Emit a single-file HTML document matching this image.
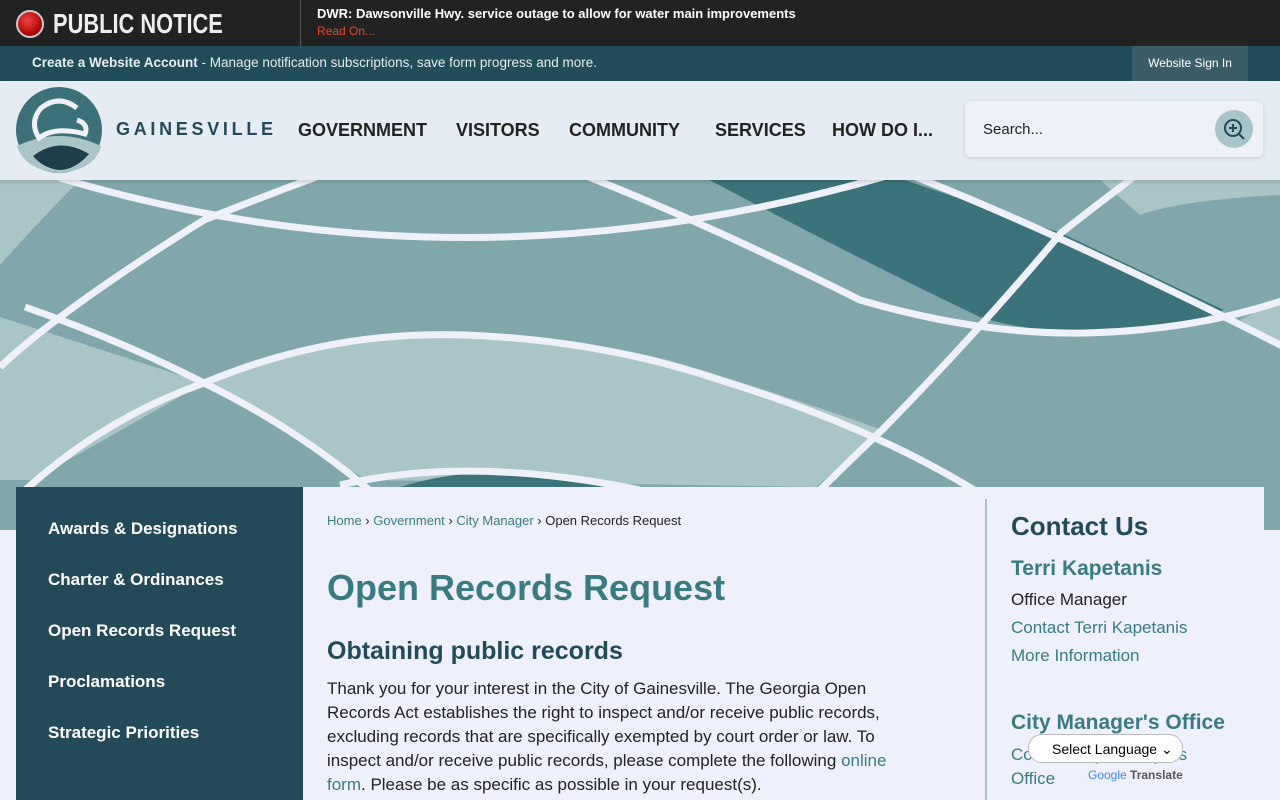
<!DOCTYPE html>
<html><head><meta charset="utf-8"><style>
*{margin:0;padding:0;box-sizing:border-box}
body{width:1280px;height:800px;overflow:hidden;background:#eef1fb;font-family:"Liberation Sans",sans-serif;position:relative}
.top{position:absolute;left:0;top:0;width:1280px;height:46px;background:#222}
.pn{position:absolute;left:16px;top:8px;display:flex;align-items:center;color:#eee;font-weight:bold;font-size:28px}
.pn span{display:inline-block;transform:scaleX(0.78);transform-origin:left}
.dot{width:28px;height:28px;border-radius:50%;background:radial-gradient(circle at 40% 35%,#e44,#a00 70%);border:2px solid #ccc;margin-right:9px}
.sep{position:absolute;left:300px;top:0;width:1px;height:46px;background:#555}
.news{position:absolute;left:317px;top:6px;color:#fff;font-size:13px;font-weight:bold}
.news span{display:block;color:#e4452d;font-size:12px;font-weight:normal;margin-top:3px}
.acct{position:absolute;left:0;top:46px;width:1280px;height:35px;background:#214c5a;color:#e6eef0;font-size:13.5px;padding:9px 32px}
.sign{position:absolute;right:32px;top:0;height:35px;width:116px;background:#3a5d69;color:#fff;font-size:12px;text-align:center;line-height:35px}
.hdr{position:absolute;left:0;top:81px;width:1280px;height:99px;background:#e6ecf4;box-shadow:0 2px 4px rgba(0,0,0,.15)}
.nav{position:absolute;top:120px;font-size:18px;font-weight:bold;color:#222}
.search{position:absolute;left:965px;top:101px;width:298px;height:56px;background:#eef1f8;border-radius:6px;box-shadow:0 1px 4px rgba(0,0,0,.15);font-size:15px;color:#222;padding:20px 18px}
.sbtn{position:absolute;right:10px;top:9px;width:38px;height:38px;border-radius:50%;background:#a9c4c8}
.side{position:absolute;left:16px;top:487px;width:287px;height:313px;background:#234a58}
.side div{color:#fff;font-size:17px;font-weight:bold;position:absolute;left:32px}
.main{position:absolute;left:303px;top:487px;width:961px;height:313px;background:#eef1fb}
a{color:#3a7b82}
</style></head><body>
<div class="top"><div class="pn"><div class="dot"></div><span>PUBLIC NOTICE</span></div><div class="sep"></div>
<div class="news">DWR: Dawsonville Hwy. service outage to allow for water main improvements<span>Read On...</span></div></div>
<div class="acct"><b>Create a Website Account</b> - Manage notification subscriptions, save form progress and more.<div class="sign">Website Sign In</div></div>
<svg style="position:absolute;left:0;top:180px" width="1280" height="350" viewBox="0 180 1280 350">
<rect x="0" y="180" width="1280" height="350" fill="#80a8ac"/>
<path d="M0 180 L80 180 Q40 220 0 265Z" fill="#a9c5c7"/>
<path d="M1100 180 L1280 180 L1280 195 Q1180 200 1140 215Z" fill="#a9c5c7"/>
<path d="M700 175 L890 175 L1061 233 L1224 310 Q1150 340 1086 333 Q1020 330 980 317 Q860 260 700 175Z" fill="#3c737b"/>
<path d="M0 317 L204 383 L33 480 L0 480Z" fill="#a9c5c7"/>
<path d="M204 383 Q330 330 465 335 Q600 340 678 363 Q800 400 882 430 L816 487 L367 480Z" fill="#a9c5c7"/>
<path d="M1240 320 L1280 300 L1280 345Z" fill="#a9c5c7"/>
<path d="M400 487 Q470 465 560 475 Q600 480 640 487Z" fill="#3c737b"/>
<path d="M0 487 L1280 487 L1280 530 L0 530Z" fill="#80a8ac"/>
<g fill="none" stroke="#eef1fa" stroke-width="7">
<path d="M60 178 Q470 300 900 172"/>
<path d="M571 170 Q700 220 860 300 Q980 335 1086 333 Q1200 330 1290 298"/>
<path d="M898 170 Q1061 233 1300 355"/>
<path d="M1143 170 Q1090 210 1061 233 Q980 330 882 430 Q840 470 810 500"/>
<path d="M0 367 Q60 310 204 220 Q280 190 330 172"/>
<path d="M25 307 Q120 340 204 383 Q300 430 375 495"/>
<path d="M20 495 Q100 420 204 383 Q330 330 465 335 Q600 340 720 380 Q882 430 990 500"/>
<path d="M340 485 Q470 455 640 490"/>
</g>
</svg>
<div class="hdr"></div>
<svg style="position:absolute;left:15px;top:86px" width="88" height="88" viewBox="0 0 88 88">
<circle cx="44" cy="44" r="43" fill="#3d7179"/>
<path d="M2 60 Q44 40 86 60 Q80 84 44 87 Q10 84 2 60Z" fill="#a9c5c7"/>
<path d="M18 70 Q44 50 74 68 Q60 84 44 84 Q28 82 18 70Z" fill="#1d3e4a"/>
<path d="M62 22 Q44 8 26 22 Q14 36 24 52 Q40 40 70 48 Q74 38 62 34" fill="none" stroke="#eef1fa" stroke-width="5"/>
</svg>
<div style="position:absolute;left:116px;top:119px;font-size:18px;font-weight:bold;letter-spacing:3.7px;color:#234a58">GAINESVILLE</div>
<div class="nav" style="left:298px">GOVERNMENT</div>
<div class="nav" style="left:456px">VISITORS</div>
<div class="nav" style="left:569px">COMMUNITY</div>
<div class="nav" style="left:715px">SERVICES</div>
<div class="nav" style="left:832px">HOW DO I...</div>
<div class="search">Search...<div class="sbtn"><svg width="38" height="38"><circle cx="18" cy="18" r="8" fill="none" stroke="#234a58" stroke-width="2"/><path d="M14 18h8M18 14v8M24 24l5 5" stroke="#234a58" stroke-width="2"/></svg></div></div>
<div class="side">
<div style="top:32px">Awards &amp; Designations</div>
<div style="top:83px">Charter &amp; Ordinances</div>
<div style="top:134px">Open Records Request</div>
<div style="top:185px">Proclamations</div>
<div style="top:236px">Strategic Priorities</div>
</div>
<div class="main">
<div style="position:absolute;left:24px;top:26px;font-size:13px;color:#222"><a style="text-decoration:none">Home</a> › <a style="text-decoration:none">Government</a> › <a style="text-decoration:none">City Manager</a> › Open Records Request</div>
<div style="position:absolute;left:24px;top:80px;font-size:36px;font-weight:bold;color:#3a7b82">Open Records Request</div>
<div style="position:absolute;left:24px;top:150px;font-size:25px;font-weight:bold;color:#234a58">Obtaining public records</div>
<div style="position:absolute;left:24px;top:190px;width:600px;font-size:17px;line-height:24px;color:#222">Thank you for your interest in the City of Gainesville. The Georgia Open Records Act establishes the right to inspect and/or receive public records, excluding records that are specifically exempted by court order or law. To inspect and/or receive public records, please complete the following <a>online form</a>. Please be as specific as possible in your request(s).</div>
<div style="position:absolute;left:682px;top:12px;width:2px;height:301px;background:#a9c0c8"></div>
<div style="position:absolute;left:708px;top:24px;font-size:26px;font-weight:bold;color:#234a58">Contact Us</div>
<div style="position:absolute;left:708px;top:70px;font-size:21px;font-weight:bold;color:#3a7b82">Terri Kapetanis</div>
<div style="position:absolute;left:708px;top:103px;font-size:17px;color:#222">Office Manager</div>
<div style="position:absolute;left:708px;top:131px;font-size:17px"><a>Contact Terri Kapetanis</a></div>
<div style="position:absolute;left:708px;top:159px;font-size:17px"><a>More Information</a></div>
<div style="position:absolute;left:708px;top:224px;font-size:21px;font-weight:bold;color:#3a7b82">City Manager's Office</div>
<div style="position:absolute;left:708px;top:256px;font-size:17px;line-height:24px"><a>Contact City Manager's<br>Office</a></div>
</div>
<div style="position:absolute;left:1028px;top:734px;width:155px;height:29px;border:1px solid #bbb;border-radius:14px;background:#fff;font-size:14px;padding:6px 0 0 23px;color:#000">Select Language ⌄</div>
<div style="position:absolute;left:1088px;top:768px;font-size:12px;color:#555"><span style="color:#4285f4">Google</span> <b>Translate</b></div>
</body></html>
